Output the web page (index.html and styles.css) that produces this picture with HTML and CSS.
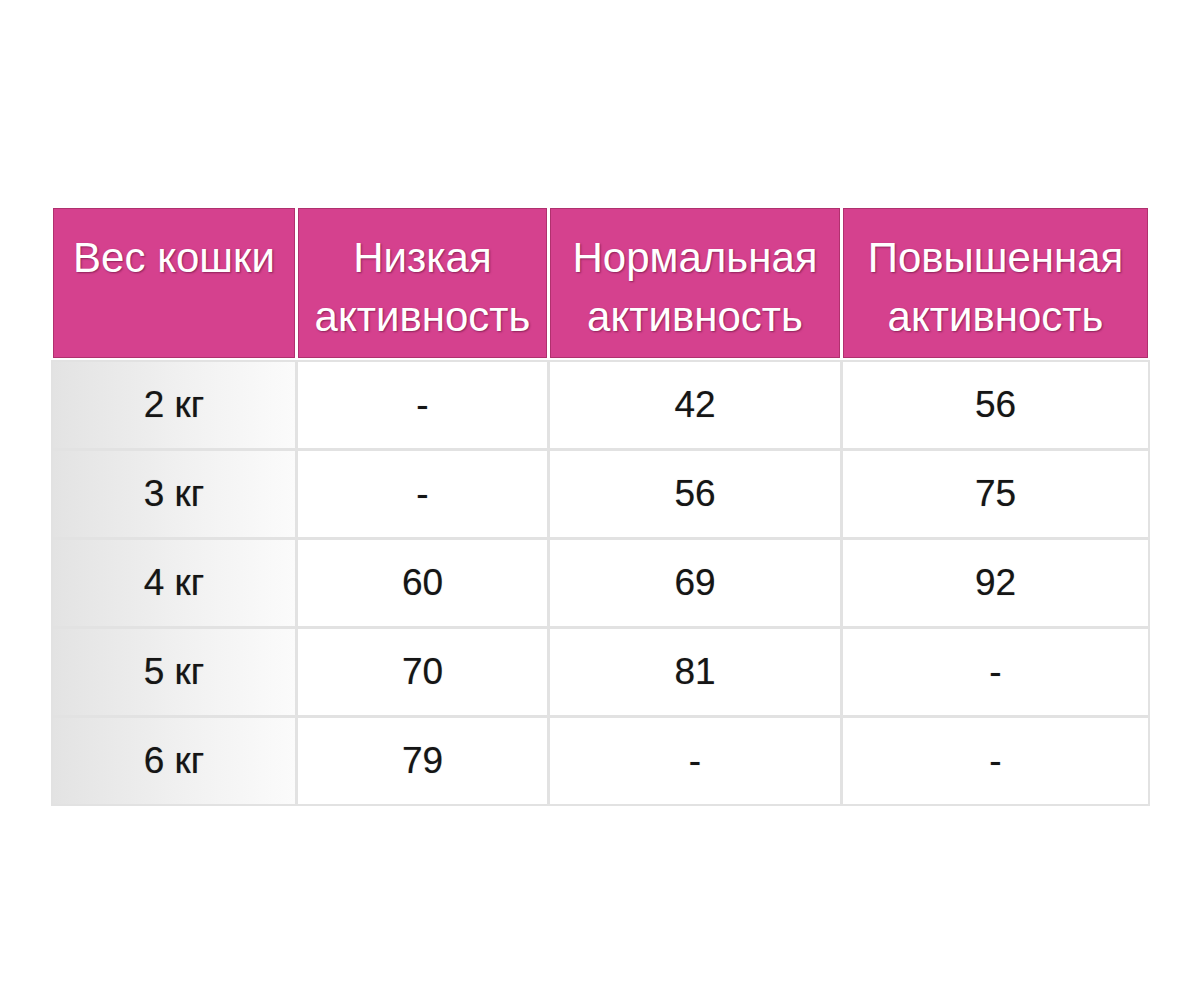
FILE: index.html
```html
<!DOCTYPE html>
<html lang="ru">
<head>
<meta charset="utf-8">
<title>Вес кошки</title>
<link rel="stylesheet" href="styles.css">
</head>
<body>
<div class="page">
  <div class="table">
    <div class="head">
      <div class="hcell">Вес кошки</div>
      <div class="hcell">Низкая<br>активность</div>
      <div class="hcell">Нормальная<br>активность</div>
      <div class="hcell">Повышенная<br>активность</div>
    </div>
    <div class="body">
      <div class="cell first">2 кг</div><div class="cell">-</div><div class="cell">42</div><div class="cell">56</div>
      <div class="cell first">3 кг</div><div class="cell">-</div><div class="cell">56</div><div class="cell">75</div>
      <div class="cell first">4 кг</div><div class="cell">60</div><div class="cell">69</div><div class="cell">92</div>
      <div class="cell first">5 кг</div><div class="cell">70</div><div class="cell">81</div><div class="cell">-</div>
      <div class="cell first">6 кг</div><div class="cell">79</div><div class="cell">-</div><div class="cell">-</div>
    </div>
  </div>
</div>
</body>
</html>
```

FILE: styles.css
```css
html, body {
  margin: 0;
  padding: 0;
  background: #ffffff;
}
.page {
  padding: 208px 52px 0 53px;
  font-family: "Liberation Sans", Arial, sans-serif;
}
.table {
  width: 1095px;
}
.head,
.body {
  display: grid;
  grid-template-columns: 242px 249px 290px 305px;
  column-gap: 3px;
}
.head {
  height: 150px;
}
.hcell {
  background: #d5418e;
  border: 1px solid #b0316e;
  color: #ffffff;
  font-size: 42px;
  line-height: 59px;
  text-align: center;
  padding-top: 19px;
  text-shadow: 1px 1px 2px rgba(80, 10, 45, 0.55);
}
.body {
  margin: 2px -2px 0;
  row-gap: 3px;
  background: #e2e2e2;
  border: 2px solid #e2e2e2;
  grid-auto-rows: 86px;
}
.cell {
  background: #ffffff;
  color: #151515;
  font-size: 37px;
  display: flex;
  align-items: center;
  justify-content: center;
  text-shadow: 0 0 1px rgba(0, 0, 0, 0.35);
}
.cell.first {
  background: linear-gradient(to right, #e3e3e3 0%, #f1f1f1 55%, #fbfbfb 100%);
}
```
